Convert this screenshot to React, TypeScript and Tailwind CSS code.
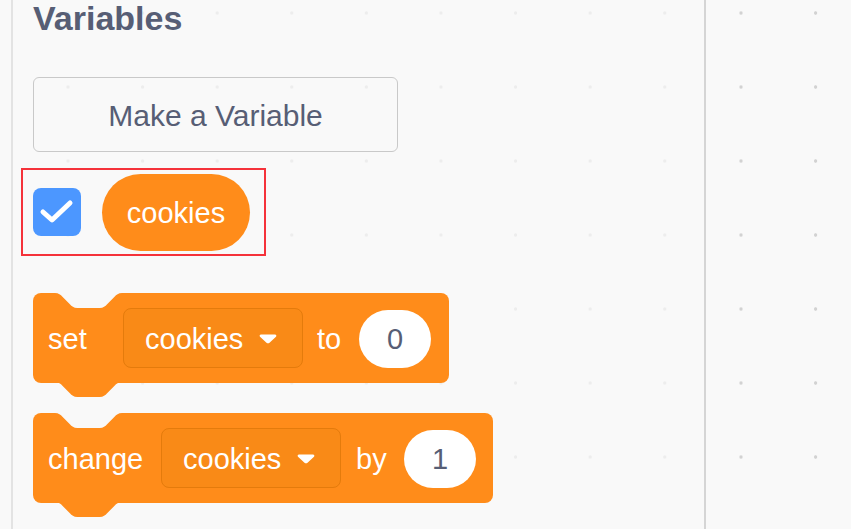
import { ReactNode } from "react"

const font = { fontFamily: '"Liberation Sans", Arial, sans-serif' }

function Notch() {
    return (
        <svg className="absolute top-0 left-[22px] w-[67px] h-[15px]" viewBox="0 0 36 8" preserveAspectRatio="none">
            <path d="M0,0 c2,0 3,1 4,2 l4,4 c1,1 2,2 4,2 h12 c2,0 3,-1 4,-2 l4,-4 c1,-1 2,-2 4,-2 Z" fill="#f9f9f9" />
        </svg>
    )
}

function Tab() {
    return (
        <svg className="absolute top-full left-[22px] w-[67px] h-[15px] -mt-px" viewBox="0 0 36 8" preserveAspectRatio="none">
            <path d="M0,0 c2,0 3,1 4,2 l4,4 c1,1 2,2 4,2 h12 c2,0 3,-1 4,-2 l4,-4 c1,-1 2,-2 4,-2 Z" fill="#ff8c1a" />
        </svg>
    )
}

function Dropdown() {
    return (
        <div className="w-[180px] h-[60px] rounded-[8px] bg-[#f98a17] border border-[#e47b0c] flex items-center pl-[21px] shrink-0">
            <span className="pt-[3px]">cookies</span>
            <svg className="ml-[16px] w-[18px] h-[11px]" viewBox="0 0 18 11">
                <path d="M2,1.5 h14 c1.2,0 1.8,1.3 1,2.2 l-6.5,6 c-0.8,0.7 -2.2,0.7 -3,0 l-6.5,-6 c-0.8,-0.9 -0.2,-2.2 1,-2.2 Z" fill="#ffffff" />
            </svg>
        </div>
    )
}

function NumberInput({ value }: { value: string }) {
    return (
        <div className="w-[72px] h-[58px] mt-[2px] rounded-full bg-white text-[#575e75] flex items-center justify-center shrink-0 pt-[2px]">
            {value}
        </div>
    )
}

function Block({ children, width }: { children: ReactNode; width: string }) {
    return (
        <div className={`relative h-[90px] ${width} rounded-[8px] bg-[#ff8c1a] text-white text-[29px] flex items-center pl-[15px]`}>
            <Notch />
            {children}
            <Tab />
        </div>
    )
}

export default function App() {
    return (
        <div className="w-[851px] h-[529px] flex bg-[#f9f9f9] overflow-hidden" style={font}>
            <div className="w-[11px] h-full shrink-0"></div>
            <div className="w-[695px] h-full shrink-0 border-l-2 border-r-2 border-l-[#e3e3e3] border-r-[#d5d5d5] pl-[20px] bg-[radial-gradient(circle,#ededed_1.3px,transparent_2px)] bg-[length:74.6px_74px] bg-[position:17.7px_-24px]">
                <h2 className="text-[34px] leading-none font-bold text-[#575e75] mt-[1px]">Variables</h2>

                <button className="mt-[42px] w-[365px] h-[75px] rounded-[6px] border border-[#c9c9c9] text-[30px] text-[#575e75] flex items-center justify-center pt-[1px]">
                    Make a Variable
                </button>

                <div className="mt-[16px] -ml-[12px] w-[245px] h-[88px] border-2 border-[#f5323a] flex items-center pl-[10px]">
                    <div className="w-[48px] h-[48px] rounded-[8px] bg-[#4c97ff] flex items-center justify-center shrink-0">
                        <svg className="w-[48px] h-[48px]" viewBox="0 0 48 48">
                            <path d="M10,24 L19,32 L37,15" stroke="#ffffff" strokeWidth="5" fill="none" strokeLinecap="round" strokeLinejoin="round" />
                        </svg>
                    </div>
                    <div className="ml-[21px] w-[148px] h-[77px] rounded-full bg-[#ff8c1a] text-white text-[29px] flex items-center justify-center pt-[3px]">
                        cookies
                    </div>
                </div>

                <div className="mt-[37px] flex flex-col gap-[30px]">
                    <Block width="w-[416px]">
                        <span className="w-[75px] shrink-0 pt-[3px]">set</span>
                        <Dropdown />
                        <span className="ml-[14px] w-[42px] shrink-0 pt-[3px]">to</span>
                        <NumberInput value="0" />
                    </Block>
                    <Block width="w-[460px]">
                        <span className="w-[113px] shrink-0 pt-[3px]">change</span>
                        <Dropdown />
                        <span className="ml-[15px] w-[48px] shrink-0 pt-[3px]">by</span>
                        <NumberInput value="1" />
                    </Block>
                </div>
            </div>
            <div className="flex-1 h-full bg-[radial-gradient(circle,#d2d2d2_1.4px,transparent_2px)] bg-[length:74.6px_74px] bg-[position:-2.3px_-24px]"></div>
        </div>
    )
}
